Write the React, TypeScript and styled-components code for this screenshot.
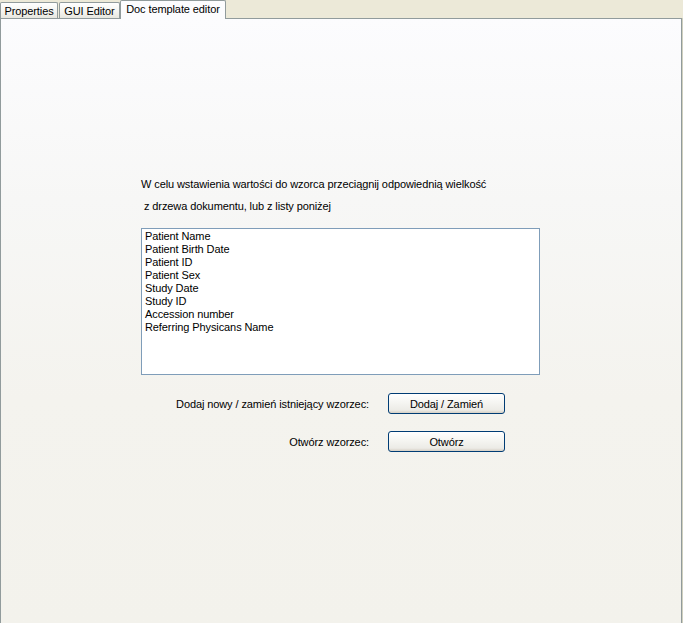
import React from "react";
import styled, { createGlobalStyle } from "styled-components";

const Global = createGlobalStyle`
  html, body { margin: 0; padding: 0; background: #ECE9D8; }
  body { font-family: "Liberation Sans", Arial, sans-serif; font-size: 11px; color: #000; }
`;

const Frame = styled.div`
  width: 683px;
  height: 623px;
  display: flex;
  flex-direction: column;
  background: #ECE9D8;
  overflow: hidden;
`;

const TabStrip = styled.div`
  height: 18px;
  display: flex;
  align-items: flex-end;
  flex: none;
`;

const Tab = styled.div<{ $active?: boolean; $w: number; $gap?: number }>`
  box-sizing: border-box;
  width: ${(p) => p.$w}px;
  height: ${(p) => (p.$active ? 19 : 16)}px;
  margin-right: ${(p) => p.$gap ?? 0}px;
  margin-bottom: ${(p) => (p.$active ? -1 : 0)}px;
  border: 1px solid #919B9C;
  border-bottom: none;
  border-radius: 2px 2px 0 0;
  background: ${(p) =>
    p.$active ? "#FCFCFE" : "linear-gradient(#FFFFFF, #F3F3EF 60%, #E7E7E0)"};
  display: flex;
  align-items: center;
  justify-content: center;
  font-size: 11px;
  letter-spacing: -0.1px;
  padding-bottom: ${(p) => (p.$active ? 3 : 0)}px;
  position: relative;
  z-index: ${(p) => (p.$active ? 2 : 1)};
`;

const Panel = styled.div`
  flex: 1;
  width: 682px;
  box-sizing: border-box;
  border-left: 1px solid #919B9C;
  border-right: 1px solid #919B9C;
  border-top: 1px solid #919B9C;
  box-shadow: 1px 0 0 #D0D0BF;
  background: linear-gradient(#FCFCFE 0px, #F7F7F6 180px, #F4F3EE 380px, #F3F2EC 100%);
  display: flex;
  flex-direction: column;
  padding: 154px 0 0 140px;
`;

const Intro = styled.p<{ $indent?: number }>`
  margin: 0;
  height: 22px;
  line-height: 22px;
  padding-left: ${(p) => p.$indent ?? 0}px;
  font-size: 11px;
  letter-spacing: -0.1px;
  white-space: pre;
`;

const ListBox = styled.div`
  box-sizing: border-box;
  width: 399px;
  height: 147px;
  margin-top: 11px;
  border: 1px solid #7F9DB9;
  background: #FFFFFF;
  padding: 1px 3px;
  display: flex;
  flex-direction: column;
`;

const ListItem = styled.div`
  height: 13px;
  line-height: 13px;
  font-size: 11px;
  letter-spacing: -0.1px;
  white-space: nowrap;
`;

const ActionRow = styled.div<{ $top: number }>`
  display: flex;
  align-items: center;
  margin-top: ${(p) => p.$top}px;
`;

const ActionLabel = styled.div`
  width: 228px;
  text-align: right;
  font-size: 11px;
  letter-spacing: -0.1px;
  margin-right: 19px;
`;

const Button = styled.button`
  box-sizing: border-box;
  width: 117px;
  height: 21px;
  border: 1px solid #003C74;
  border-radius: 3px;
  background: linear-gradient(#FFFFFF, #F4F4F0 50%, #ECEBE6 85%, #D6D0C5);
  font-family: "Liberation Sans", Arial, sans-serif;
  font-size: 11px;
  letter-spacing: -0.1px;
  color: #000;
  padding: 0;
`;

const items = [
  "Patient Name",
  "Patient Birth Date",
  "Patient ID",
  "Patient Sex",
  "Study Date",
  "Study ID",
  "Accession number",
  "Referring Physicans Name",
];

export default function App() {
  return (
    <>
      <Global />
      <Frame>
        <TabStrip>
          <Tab $w={58} $gap={1}>Properties</Tab>
          <Tab $w={61}>GUI Editor</Tab>
          <Tab $w={106} $active>Doc template editor</Tab>
        </TabStrip>
        <Panel>
          <Intro>W celu wstawienia wartości do wzorca przeciągnij odpowiednią wielkość</Intro>
          <Intro $indent={3}>z drzewa dokumentu, lub z listy poniżej</Intro>
          <ListBox>
            {items.map((t) => (
              <ListItem key={t}>{t}</ListItem>
            ))}
          </ListBox>
          <ActionRow $top={18}>
            <ActionLabel>Dodaj nowy / zamień istniejący wzorzec:</ActionLabel>
            <Button>Dodaj / Zamień</Button>
          </ActionRow>
          <ActionRow $top={17}>
            <ActionLabel>Otwórz wzorzec:</ActionLabel>
            <Button>Otwórz</Button>
          </ActionRow>
        </Panel>
      </Frame>
    </>
  );
}
